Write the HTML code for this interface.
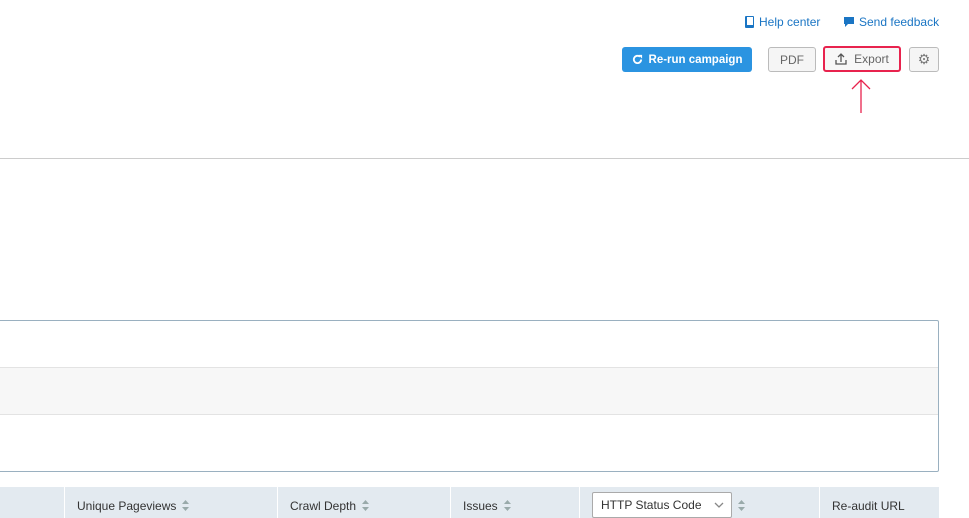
<!DOCTYPE html>
<html><head><meta charset="utf-8"><style>
*{box-sizing:border-box;margin:0;padding:0}
body{width:969px;height:518px;overflow:hidden;background:#fff;font-family:"Liberation Sans",sans-serif;position:relative}
.a{position:absolute}
.link{color:#1a75c4;font-size:12px}
.btn{position:absolute;height:25px;border-radius:3px;font-size:12px;display:flex;align-items:center;justify-content:center}
.th{position:absolute;top:487px;height:31px;font-size:12px;color:#333;display:flex;align-items:center;padding-left:12px;padding-top:6px;border-left:1px solid #fff}
.s{display:inline-block;margin-left:5px;width:9px;height:13px;vertical-align:middle}
</style></head><body>
<div class="a link" style="left:745px;top:15px"><svg width="10" height="12" style="vertical-align:-2px;margin-right:4px"><rect x="0" y="0" width="9" height="12" rx="1" fill="#1a75c4"/><rect x="2" y="1" width="6" height="8" fill="#fff"/></svg>Help center</div>
<div class="a link" style="left:843px;top:15px"><svg width="12" height="12" style="vertical-align:-2px;margin-right:4px"><path d="M1 1h10v7H5L2 11V8H1z" fill="#1a75c4"/></svg>Send feedback</div>
<div class="btn" style="left:622px;top:47px;width:130px;background:#2b94e1;color:#fff;font-weight:bold;font-size:11.5px"><svg width="11" height="11" style="margin-right:6px" viewBox="0 0 12 12"><path d="M10 6a4 4 0 1 1-1.3-3" stroke="#fff" stroke-width="2" fill="none"/><path d="M7 1h4v4z" fill="#fff"/></svg>Re-run campaign</div>
<div class="btn" style="left:768px;top:47px;width:48px;background:#f5f5f5;border:1px solid #bbb;color:#666">PDF</div>
<div class="btn" style="left:823px;top:46px;width:78px;height:26px;border:2px solid #e8234e;color:#666;background:#f7f7f7"><svg width="12" height="12" style="margin-right:7px" viewBox="0 0 12 12"><path d="M1 7v4h10V7" stroke="#555" stroke-width="1.3" fill="none"/><path d="M6 9V1M3 4l3-3 3 3" stroke="#555" stroke-width="1.3" fill="none"/></svg>Export</div>
<div class="btn" style="left:909px;top:47px;width:30px;background:#f5f5f5;border:1px solid #bbb;color:#777;font-size:14px">⚙</div>
<svg class="a" style="left:850px;top:78px" width="22" height="36"><path d="M11 35V2M2 11l9-9 9 9" stroke="#e8234e" stroke-width="1.3" fill="none"/></svg>
<div class="a" style="left:0;top:158px;width:969px;height:1px;background:#ccc"></div>
<div class="a" style="left:-2px;top:320px;width:941px;height:152px;border:1px solid #9ab0c0;border-radius:2px"></div>
<div class="a" style="left:0;top:367px;width:938px;height:48px;background:#f7f7f7;border-top:1px solid #e3e3e3;border-bottom:1px solid #e3e3e3"></div>
<div class="a" style="left:0;top:487px;width:939px;height:31px;background:#e3eaf0"></div>
<div class="th" style="left:64px">Unique Pageviews<svg class="s" viewBox="0 0 9 13"><path d="M1 5l3.5-4 3.5 4zM1 8l3.5 4 3.5-4z" fill="#9aa"/></svg></div>
<div class="th" style="left:277px">Crawl Depth<svg class="s" viewBox="0 0 9 13"><path d="M1 5l3.5-4 3.5 4zM1 8l3.5 4 3.5-4z" fill="#9aa"/></svg></div>
<div class="th" style="left:450px">Issues<svg class="s" viewBox="0 0 9 13"><path d="M1 5l3.5-4 3.5 4zM1 8l3.5 4 3.5-4z" fill="#9aa"/></svg></div>
<div class="th" style="left:579px;padding-top:0"><span style="display:inline-flex;align-items:center;width:140px;height:26px;margin-top:5px;background:#fff;border:1px solid #aaa;border-radius:2px;padding-left:8px">HTTP Status Code<svg width="10" height="7" style="margin-left:12px"><path d="M1 1l4 4 4-4" stroke="#888" stroke-width="1.3" fill="none"/></svg></span><svg class="s" style="margin-top:6px" viewBox="0 0 9 13"><path d="M1 5l3.5-4 3.5 4zM1 8l3.5 4 3.5-4z" fill="#9aa"/></svg></div>
<div class="th" style="left:819px">Re-audit URL</div>
</body></html>
